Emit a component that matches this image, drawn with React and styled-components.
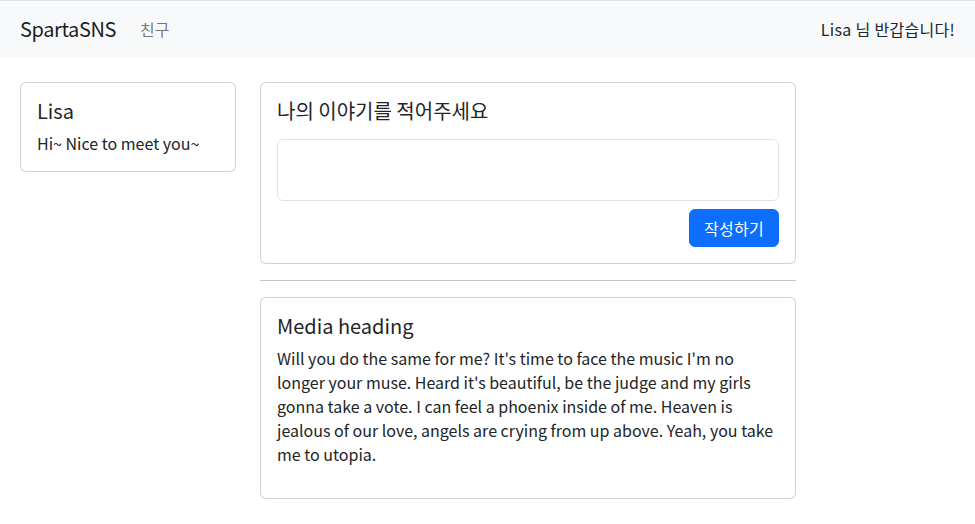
import React from 'react';
import styled, {createGlobalStyle} from 'styled-components';

const GlobalStyle = createGlobalStyle`
  body {
    margin: 0;
    background: #fff;
    color: #212529;
    font: 16px/1.5 "Noto Sans CJK KR", "Noto Sans", sans-serif;
  }
  * { box-sizing: border-box; }
`;

const Navbar = styled.nav`
  display: flex;
  align-items: center;
  height: 57px;
  padding: 8px 20px;
  border-top: 1px solid #dee2e6;
  background-color: #f8f9fa;
`;

const Brand = styled.a`
  margin-right: 16px;
  padding: 5px 0;
  color: rgba(0, 0, 0, 0.9);
  font-size: 20px;
  line-height: 30px;
  letter-spacing: -0.4px;
  text-decoration: none;
`;

const NavLink = styled.a`
  padding: 8px;
  color: rgba(0, 0, 0, 0.55);
  text-decoration: none;
`;

const Greeting = styled.span`
  margin-left: auto;
  color: #212529;
  letter-spacing: 0.3px;
`;

const Page = styled.main`
  display: flex;
  align-items: flex-start;
  gap: 24px;
  padding: 25px 20px 24px;
`;

const Card = styled.div`
  width: ${p => p.width}px;
  padding: 16px;
  border: 1px solid rgba(0, 0, 0, 0.175);
  border-radius: 6px;
  background: #fff;
`;

const Title = styled.h5`
  margin: 0 0 8px;
  font-size: 20px;
  font-weight: 400;
  line-height: 1.2;
`;

const Text = styled.p`
  margin: 0 0 ${p => p.bottom || 0}px;
`;

const Feed = styled.section`
  display: flex;
  flex-direction: column;
  width: 536px;
`;

const Input = styled.textarea`
  display: block;
  width: 100%;
  height: 62px;
  margin-top: 16px;
  padding: 6px 12px;
  border: 1px solid #dee2e6;
  border-radius: 6px;
  font: inherit;
  resize: none;
`;

const Actions = styled.div`
  display: flex;
  justify-content: flex-end;
  margin-top: 8px;
`;

const Button = styled.button`
  height: 38px;
  padding: 6px 14px;
  border: 1px solid #0d6efd;
  border-radius: 6px;
  background: #0d6efd;
  color: #fff;
  font: inherit;
  letter-spacing: 0.3px;
`;

const Divider = styled.hr`
  width: 100%;
  margin: 16px 0;
  border: 0;
  border-top: 1px solid #c4c4c4;
`;

export default function App() {
  return (
    <>
      <GlobalStyle />
      <Navbar>
        <Brand href="#">SpartaSNS</Brand>
        <NavLink href="#">친구</NavLink>
        <Greeting>Lisa 님 반갑습니다!</Greeting>
      </Navbar>
      <Page>
        <Card width={216}>
          <Title>Lisa</Title>
          <Text>Hi~ Nice to meet you~</Text>
        </Card>
        <Feed>
          <Card width={536}>
            <Title>나의 이야기를 적어주세요</Title>
            <Input />
            <Actions>
              <Button>작성하기</Button>
            </Actions>
          </Card>
          <Divider />
          <Card width={536}>
            <Title>Media heading</Title>
            <Text bottom={16}>
              Will you do the same for me? It's time to face the music I'm no longer your muse. Heard it's
              beautiful, be the judge and my girls gonna take a vote. I can feel a phoenix inside of me.
              Heaven is jealous of our love, angels are crying from up above. Yeah, you take me to utopia.
            </Text>
          </Card>
        </Feed>
      </Page>
    </>
  );
}
